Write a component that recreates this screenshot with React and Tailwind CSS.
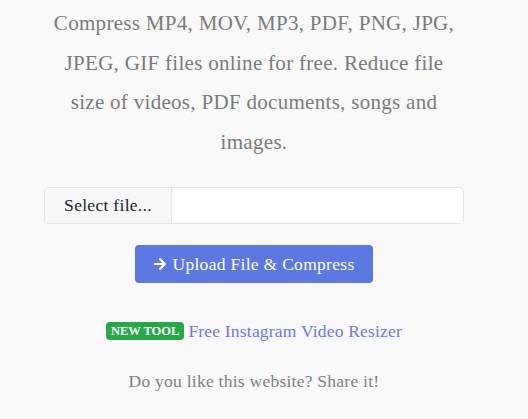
import React from 'react';
import { FaArrowRight } from 'react-icons/fa';

const serif = { fontFamily: '"Liberation Serif", "DejaVu Serif", serif' };

const App = () => {
    return (
        <div className="min-h-[419px] w-full bg-[#f9f9f9]" style={serif}>
            <div className="ml-[44px] w-[420px] pt-[4px] flex flex-col items-center">
                <p className="text-center text-[21px] leading-[39.5px] tracking-[0.3px] text-[#7b7b7b]">
                    Compress MP4, MOV, MP3, PDF, PNG, JPG,<br />
                    JPEG, GIF files online for free. Reduce file<br />
                    size of videos, PDF documents, songs and<br />
                    images.
                </p>

                <div className="mt-[25px] flex h-[37px] w-full rounded border border-[#e1e4e8] bg-white">
                    <div className="flex w-[127px] items-center justify-center border-r border-[#e1e4e8] bg-[#f7f8f9] text-[17.5px] tracking-[0.3px] text-[#212529]">
                        Select file...
                    </div>
                    <div className="flex-1" />
                </div>

                <button className="mt-[21px] flex h-[38px] w-[238px] items-center justify-center gap-[5px] rounded bg-[#5b79e0] text-[17.5px] tracking-[0.3px] text-white">
                    <FaArrowRight className="text-[14px]" />
                    Upload File & Compress
                </button>

                <div className="mt-[35px] flex items-center gap-[4px]">
                    <span className="rounded-[4px] bg-[#28a745] px-[5px] py-[1px] text-[12.5px] font-bold leading-[16px] text-white">
                        NEW TOOL
                    </span>
                    <a href="#" className="text-[17.5px] tracking-[0.2px] text-[#6b78e2]">Free Instagram Video Resizer</a>
                </div>

                <p className="mt-[24px] text-[17.5px] tracking-[0.25px] text-[#808080]">Do you like this website? Share it!</p>
            </div>
        </div>
    );
};

export default App;
